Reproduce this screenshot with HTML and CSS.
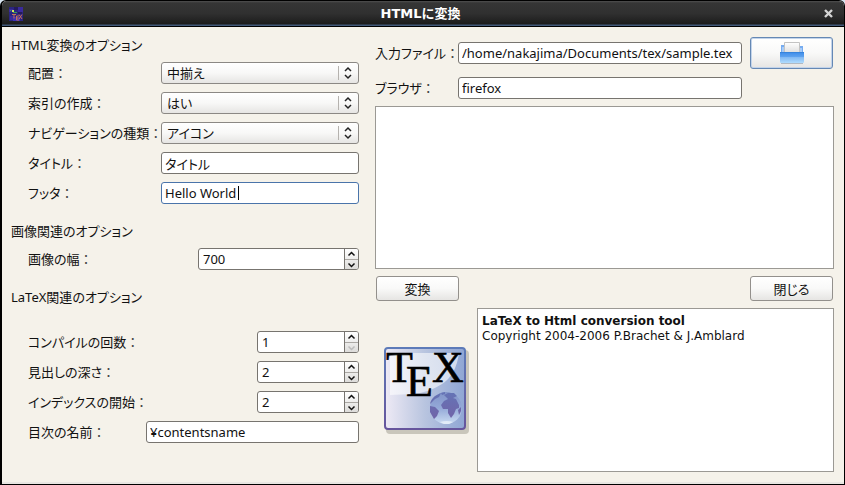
FILE: index.html
```html
<!DOCTYPE html>
<html lang="ja">
<head>
<meta charset="utf-8">
<title>HTMLに変換</title>
<link rel="stylesheet" href="styles.css">
</head>
<body>
<div class="window">
  <header class="titlebar">
    <svg class="app-icon" viewBox="0 0 14 14" aria-hidden="true">
      <rect width="14" height="14" fill="#2b2580"/>
      <path d="M0 2h4v3H0zM9 0h5v5H9zM1 9h4v4H1z" fill="#3a2a9c"/>
      <path d="M5 0h4v3H5zM9 5h4v2H9z" fill="#241b5c"/>
      <path d="M4 10h7v4H4z" fill="#3c30b4"/>
      <path d="M3 3h2v2H3z" fill="#d5e85c"/>
      <path d="M4 5h4v1H4zM1 3h1v1H1z" fill="#3c9c55"/>
      <path d="M3 7.500h4M5 7.500v4M7.500 9h2.500M7.500 11h2M7.500 13h2.500M7.500 9v4M10 7.500l3 4.500M13 7.500l-3 4.500" fill="none" stroke="#c46f5c"/>
    </svg>
    <h1>HTMLに変換</h1>
    <button class="close" aria-label="ウィンドウを閉じる"><svg viewBox="0 0 9 9"><path d="M1 1l7 7M8 1l-7 7" stroke="#d4d4d4" stroke-width="2.4"/></svg></button>
  </header>
  <main class="content">
    <form class="options">
      <section>
        <h2>HTML変換のオプション</h2>
        <div class="row"><label for="align">配置<span class="colon">：</span></label><div class="combo"><select id="align"><option>中揃え</option></select><svg viewBox="0 0 20 20"><path d="M.5 3v14" stroke="#b5b2ae"/><path d="M7 8l3-3 3 3M7 12l3 3 3-3"/></svg></div></div>
        <div class="row"><label for="index">索引の作成<span class="colon">：</span></label><div class="combo"><select id="index"><option>はい</option></select><svg viewBox="0 0 20 20"><path d="M.5 3v14" stroke="#b5b2ae"/><path d="M7 8l3-3 3 3M7 12l3 3 3-3"/></svg></div></div>
        <div class="row"><label for="nav">ナビゲーションの種類<span class="colon">：</span></label><div class="combo"><select id="nav"><option>アイコン</option></select><svg viewBox="0 0 20 20"><path d="M.5 3v14" stroke="#b5b2ae"/><path d="M7 8l3-3 3 3M7 12l3 3 3-3"/></svg></div></div>
        <div class="row"><label for="title">タイトル<span class="colon">：</span></label><input class="field medium" id="title" type="text" value="タイトル"></div>
        <div class="row"><label for="footer">フッタ<span class="colon">：</span></label><div class="medium active"><input class="field" id="footer" type="text" value="Hello World"><span class="caret"></span></div></div>
      </section>
      <section>
        <h2>画像関連のオプション</h2>
        <div class="row"><label for="width">画像の幅<span class="colon">：</span></label><div class="spin wide"><input id="width" type="number" value="700"><div class="steps"><button type="button" aria-label="増やす"><svg viewBox="0 0 9 6"><path d="M1.500 4.500l3-3 3 3"/></svg></button><button type="button" aria-label="減らす"><svg viewBox="0 0 9 6"><path d="M1.500 1.500l3 3 3-3"/></svg></button></div></div></div>
      </section>
      <section class="latex">
        <h2>LaTeX関連のオプション</h2>
        <div class="row"><label for="runs">コンパイルの回数<span class="colon">：</span></label><div class="spin"><input id="runs" type="number" min="1" value="1"><div class="steps"><button type="button" aria-label="増やす"><svg viewBox="0 0 9 6"><path d="M1.500 4.500l3-3 3 3"/></svg></button><button type="button" disabled aria-label="減らす"><svg viewBox="0 0 9 6"><path d="M1.500 1.500l3 3 3-3"/></svg></button></div></div></div>
        <div class="row"><label for="depth">見出しの深さ<span class="colon">：</span></label><div class="spin"><input id="depth" type="number" value="2"><div class="steps"><button type="button" aria-label="増やす"><svg viewBox="0 0 9 6"><path d="M1.500 4.500l3-3 3 3"/></svg></button><button type="button" aria-label="減らす"><svg viewBox="0 0 9 6"><path d="M1.500 1.500l3 3 3-3"/></svg></button></div></div></div>
        <div class="row"><label for="start">インデックスの開始<span class="colon">：</span></label><div class="spin"><input id="start" type="number" value="2"><div class="steps"><button type="button" aria-label="増やす"><svg viewBox="0 0 9 6"><path d="M1.500 4.500l3-3 3 3"/></svg></button><button type="button" aria-label="減らす"><svg viewBox="0 0 9 6"><path d="M1.500 1.500l3 3 3-3"/></svg></button></div></div></div>
        <div class="row"><label for="toc">目次の名前<span class="colon">：</span></label><input class="field long" id="toc" type="text" value="¥contentsname"></div>
      </section>
    </form>
    <div class="convert">
      <div class="sources">
        <label for="file">入力ファイル<span class="colon">：</span></label>
        <input class="field" id="file" type="text" value="/home/nakajima/Documents/tex/sample.tex">
        <button class="button open" aria-label="ファイルを開く"><svg viewBox="0 0 26 24" aria-hidden="true">
          <defs>
            <linearGradient id="tray" x2="0" y2="1"><stop stop-color="#3b8bea"/><stop offset=".45" stop-color="#5fa3ef"/><stop offset=".5" stop-color="#83baf4"/><stop offset="1" stop-color="#b0dcfd"/></linearGradient>
            <linearGradient id="paper" x2="0" y2="1"><stop stop-color="#fff"/><stop offset="1" stop-color="#dcdcdc"/></linearGradient>
          </defs>
          <path d="M2 4h6v9H2zM18 5h6v8h-6z" fill="#76acf0"/>
          <path d="M3 6h3v6H3zM20 7h3v6h-3z" fill="#a8ccf8"/>
          <path d="M5.500 1.500h15v11h-15z" fill="url(#paper)" stroke="#c3c3c3"/>
          <rect x="1" y="11" width="24" height="11" rx="1" fill="url(#tray)"/>
          <path d="M1 11.500h24" stroke="#3784dc"/>
          <path d="M2 22.500h22" stroke="#8c9aaa" opacity=".6"/>
        </svg></button>
        <label for="browser">ブラウザ<span class="colon">：</span></label>
        <input class="field" id="browser" type="text" value="firefox">
      </div>
      <textarea class="log" aria-label="出力"></textarea>
      <div class="actions"><button class="button">変換</button><button class="button">閉じる</button></div>
      <div class="about">
        <svg class="logo" viewBox="0 0 86 87" role="img" aria-label="TeX">
          <defs>
            <linearGradient id="face"><stop stop-color="#eeeaf5"/><stop offset=".5" stop-color="#b8c4df"/><stop offset="1" stop-color="#8fa6d4"/></linearGradient>
            <linearGradient id="rim" x2="0" y2="1"><stop stop-color="#5d7bb9"/><stop offset="1" stop-color="#66559c"/></linearGradient>
            <linearGradient id="shine" y2="1"><stop stop-color="#fff" stop-opacity=".55"/><stop offset="1" stop-color="#fff" stop-opacity=".6"/></linearGradient>
            <linearGradient id="sea" x2="0" y2="1"><stop stop-color="#8193c8"/><stop offset=".5" stop-color="#94a9d8"/><stop offset="1" stop-color="#cbdcf2"/></linearGradient>
            <linearGradient id="land" x2="0" y2="1"><stop stop-color="#6474b6"/><stop offset="1" stop-color="#7264a8"/></linearGradient>
          </defs>
          <rect x="2" y="3" width="83" height="84" rx="4" fill="#c9c6bb"/>
          <rect x="1" y="1" width="80" height="81" rx="3" fill="url(#face)" stroke="url(#rim)" stroke-width="2"/>
          <path d="M6 8Q6 6 8 6H75Q72 28 58 37T28 47L6 48Z" fill="url(#shine)"/>
          <g class="letters"><text x="2" y="35">T</text><text x="22" y="49">E</text><text x="48" y="35">X</text></g>
          <circle cx="62" cy="61" r="16" fill="url(#sea)"/>
          <path d="M46 57q1-5 5-8l6-3-2 4-4 2zM46 59l5 1 4 4-2 5-3 3-4-7zM60 48l4-2 6 0 3 3-4 2 3 1 3 6 0 3-3 1-2 5-3 4-3-5 0-4-5 0-2-4 3-4 4-2zM74 63l3-3 0 4-2 4zM57 46l4-1 0 2-3 1z" fill="url(#land)"/>
          <path d="M56 75q7-2 13 0l-4 2h-5z" fill="#e2ecf8"/>
        </svg>
        <div class="credits"><strong>LaTeX to Html conversion tool</strong><p>Copyright 2004-2006 P.Brachet &amp; J.Amblard</p></div>
      </div>
    </div>
  </main>
</div>
</body>
</html>
```
FILE: styles.css
```css
* { box-sizing: border-box; }
body { margin: 0; background: #d8e4f0; }
body, input, select, button, textarea {
  font-family: "Noto Sans", "Noto Sans CJK JP", sans-serif;
  font-size: 13px;
  font-feature-settings: "palt";
  color: #111;
}
.colon { font-feature-settings: "palt" 0; color: #444; }
button { padding: 0; border: 0; background: none; }
svg { display: block; fill: none; }
h1, h2, p { margin: 0; }

.window {
  display: flex;
  flex-direction: column;
  min-height: 100vh;
  border: solid #000;
  border-width: 1px 1px 1px 2px;
  border-radius: 6px 6px 0 0;
  background: #f5f2ea;
  overflow: hidden;
}
.titlebar {
  display: grid;
  grid-template-columns: 20px 1fr 24px;
  align-items: center;
  height: 26px;
  padding: 0 8px 0 7px;
  border-bottom: 1px solid #000;
  background: linear-gradient(#505050 0, #353535 2px, #303030 50%, #1c1c1c 23px, #415878 24px);
}
.app-icon { width: 14px; height: 14px; }
.titlebar h1 {
  font: bold 13px/24px "DejaVu Sans", "Noto Sans CJK JP", sans-serif;
  color: #fff;
  text-align: center;
}
.close { justify-self: end; padding: 3px; }
.close svg { width: 9px; height: 9px; }

.content {
  flex: 1;
  display: grid;
  grid-template-columns: minmax(0, 348fr) minmax(0, 459fr);
  gap: 16px;
  padding: 8px 10px 10px 9px;
  border-bottom: 2px solid #e8e6e2;
}
h2 { font-size: 13px; font-weight: normal; line-height: 20px; }
.options, .options section { display: flex; flex-direction: column; }
.options { gap: 17px; }
.options section { gap: 8px; }
.options h2 { margin-bottom: -1px; }
.options .latex h2 { margin-bottom: 16px; }
.row { display: flex; align-items: center; justify-content: space-between; padding-left: 17px; }
label { min-width: 0; line-height: 22px; white-space: nowrap; }

.field, .spin, .combo select {
  width: 100%;
  height: 22px;
  border: 1px solid #77746f;
  border-radius: 3px;
  background: #fff;
}
.field { padding: 0 3px; outline: 0; }
.combo, .row .medium { flex: none; width: 198px; }
.row .long { width: 213px; }
.combo { position: relative; }
.combo select {
  display: block;
  appearance: none;
  padding: 0 22px 0 5px;
  border-color: #8b8884;
  background: linear-gradient(#fff, #f8f8f7 50%, #e6e5e3);
}
.combo svg { position: absolute; top: 1px; right: 1px; width: 20px; height: 20px; stroke: #222; stroke-width: 1.500; pointer-events: none; }
.combo svg path:first-child { stroke-width: 1; }
.active { position: relative; display: flex; }
.active .field { border-color: #4a74aa; }
.caret { position: absolute; top: 4px; left: 77px; width: 1px; height: 14px; background: #000; }

.spin { display: flex; width: 102px; overflow: hidden; }
.spin.wide { width: 161px; }
.spin input { flex: 1; min-width: 0; padding: 0 4px; border: 0; outline: 0; background: none; appearance: textfield; }
.spin input::-webkit-inner-spin-button { appearance: none; margin: 0; }
.steps { display: grid; grid-template-rows: 1fr 1fr; width: 14px; border-left: 1px solid #77746f; background: linear-gradient(#fff, #dddcda); }
.steps button { display: grid; place-items: center; }
.steps button + button { border-top: 1px solid #aaa7a3; }
.steps svg { width: 9px; height: 6px; stroke: #111; stroke-width: 1.500; }
.steps button:disabled svg { stroke: #bbb; }

.convert { display: flex; flex-direction: column; gap: 7px; padding-top: 2px; }
.sources { display: grid; grid-template-columns: 75px 1fr 83px; column-gap: 8px; row-gap: 8px; align-items: center; padding-right: 1px; }
.button {
  width: 83px;
  height: 25px;
  border: 1px solid #93908c;
  border-radius: 3px;
  background: linear-gradient(#fff, #f9f9f8 50%, #e6e5e3);
}
.open { display: grid; place-items: center; height: 32px; border-color: #6588b4; box-shadow: inset 0 0 0 1px #c3d4ea; }
.open svg { width: 26px; height: 24px; }
.log, .credits { border: 1px solid #9b9994; background: #fff; }
.log { display: block; flex: 1; width: 100%; min-height: 120px; resize: none; outline: 0; }
.actions { display: flex; justify-content: space-between; padding: 0 1px; }
.about { display: grid; grid-template-columns: 86px 1fr; gap: 7px; align-items: center; min-height: 164px; padding-left: 9px; }
.logo { width: 86px; height: 87px; overflow: visible; }
.letters { font: 44px "Liberation Serif", serif; fill: #000; stroke: #000; stroke-width: .6; }
.credits { align-self: stretch; padding: 5px 4px; font: 12px/15px "DejaVu Sans", sans-serif; }
```
